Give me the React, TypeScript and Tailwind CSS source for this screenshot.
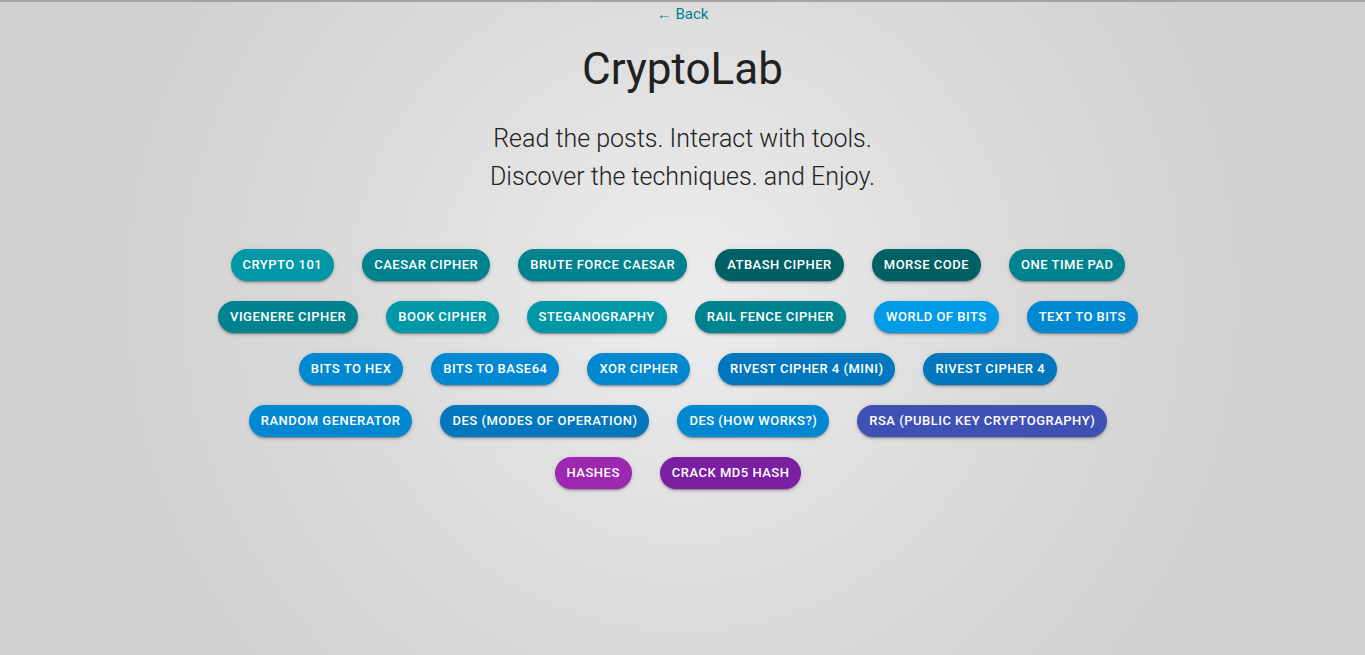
import React from 'react'

type Tool = { label: string; color: string }

const rows: Tool[][] = [
  [
    { label: 'Crypto 101', color: 'bg-[#0097a7]' },
    { label: 'Caesar Cipher', color: 'bg-[#00838f]' },
    { label: 'Brute Force Caesar', color: 'bg-[#00838f]' },
    { label: 'Atbash Cipher', color: 'bg-[#006064]' },
    { label: 'Morse Code', color: 'bg-[#006064]' },
    { label: 'One Time Pad', color: 'bg-[#00838f]' },
  ],
  [
    { label: 'Vigenere Cipher', color: 'bg-[#00838f]' },
    { label: 'Book Cipher', color: 'bg-[#0097a7]' },
    { label: 'Steganography', color: 'bg-[#0097a7]' },
    { label: 'Rail Fence Cipher', color: 'bg-[#00838f]' },
    { label: 'World of Bits', color: 'bg-[#039be5]' },
    { label: 'Text to Bits', color: 'bg-[#0288d1]' },
  ],
  [
    { label: 'Bits to Hex', color: 'bg-[#0288d1]' },
    { label: 'Bits to Base64', color: 'bg-[#0288d1]' },
    { label: 'XOR Cipher', color: 'bg-[#0288d1]' },
    { label: 'Rivest Cipher 4 (Mini)', color: 'bg-[#0277bd]' },
    { label: 'Rivest Cipher 4', color: 'bg-[#0277bd]' },
  ],
  [
    { label: 'Random Generator', color: 'bg-[#0288d1]' },
    { label: 'DES (Modes of Operation)', color: 'bg-[#0277bd]' },
    { label: 'DES (How works?)', color: 'bg-[#0288d1]' },
    { label: 'RSA (Public Key Cryptography)', color: 'bg-[#3f51b5]' },
  ],
  [
    { label: 'Hashes', color: 'bg-[#9c27b0]' },
    { label: 'Crack MD5 Hash', color: 'bg-[#7b1fa2]' },
  ],
]

export default function App() {
  return (
    <div
      className="min-h-[655px] border-t-2 border-[#a3a3a3] bg-[radial-gradient(circle_at_50%_45%,#ededed_0%,#dcdcdc_40%,#d1d1d1_75%)] text-[#212121]"
      style={{ fontFamily: 'Roboto, "Noto Sans", sans-serif' }}
    >
      <div className="flex flex-col items-center">
        <a href="#" className="mt-[3px] text-[15px] leading-[18px] text-[#00838f]">
          ← Back
        </a>
        <h1 className="mt-[20px] text-[44px] leading-[52px] font-normal">CryptoLab</h1>
        <p className="mt-[25px] text-center text-[25px] leading-[38px] font-light">
          Read the posts. Interact with tools.
          <br />
          Discover the techniques. and Enjoy.
        </p>

        <div className="mt-[53px] flex flex-col gap-5 pr-[9px]">
          {rows.map((row, i) => (
            <div key={i} className="flex justify-center gap-7">
              {row.map((t) => (
                <button
                  key={t.label}
                  className={`${t.color} h-8 rounded-full px-3 text-[13px] font-medium uppercase tracking-[0.5px] text-white shadow-[0_3px_1px_-2px_rgba(0,0,0,0.2),0_2px_2px_0_rgba(0,0,0,0.14),0_1px_5px_0_rgba(0,0,0,0.12)]`}
                >
                  {t.label}
                </button>
              ))}
            </div>
          ))}
        </div>
      </div>
    </div>
  )
}
